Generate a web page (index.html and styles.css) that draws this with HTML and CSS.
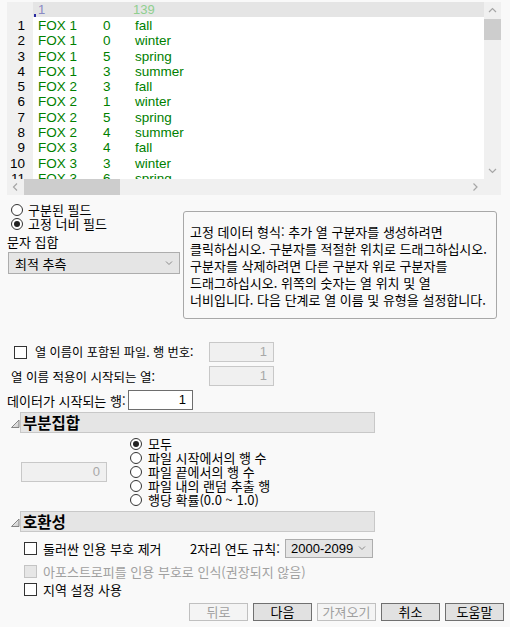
FILE: index.html
```html
<!DOCTYPE html>
<html lang="ko">
<head>
<meta charset="utf-8">
<link rel="stylesheet" href="styles.css">
</head>
<body>
<div class="preview">
  <div class="corner-tl"></div>
  <div class="head"><span class="mark"></span><span class="h1">1</span><span class="h2">139</span></div>
  <div class="vscroll">
    <svg class="up" width="17" height="17" viewBox="0 0 17 17"><polyline points="5,10 8.5,6.5 12,10" fill="none" stroke="#a6a6a6" stroke-width="1.2"/></svg>
    <div class="vthumb"></div>
    <div class="vspace"></div>
    <svg class="down" width="17" height="17" viewBox="0 0 17 17"><polyline points="5,7 8.5,10.5 12,7" fill="none" stroke="#a6a6a6" stroke-width="1.2"/></svg>
  </div>
  <div class="nums">
    <div class="r">1</div><div class="r">2</div><div class="r">3</div><div class="r">4</div><div class="r">5</div><div class="r">6</div><div class="r">7</div><div class="r">8</div><div class="r">9</div><div class="r">10</div><div class="r">11</div>
  </div>
  <div class="data">
    <div class="dr"><span>FOX 1</span><span>0</span><span>fall</span></div>
    <div class="dr"><span>FOX 1</span><span>0</span><span>winter</span></div>
    <div class="dr"><span>FOX 1</span><span>5</span><span>spring</span></div>
    <div class="dr"><span>FOX 1</span><span>3</span><span>summer</span></div>
    <div class="dr"><span>FOX 2</span><span>3</span><span>fall</span></div>
    <div class="dr"><span>FOX 2</span><span>1</span><span>winter</span></div>
    <div class="dr"><span>FOX 2</span><span>5</span><span>spring</span></div>
    <div class="dr"><span>FOX 2</span><span>4</span><span>summer</span></div>
    <div class="dr"><span>FOX 3</span><span>4</span><span>fall</span></div>
    <div class="dr"><span>FOX 3</span><span>3</span><span>winter</span></div>
    <div class="dr"><span>FOX 3</span><span>6</span><span>spring</span></div>
  </div>
  <div class="hscroll">
    <svg width="17" height="16" viewBox="0 0 17 16"><polyline points="10,4.5 6.5,8 10,11.5" fill="none" stroke="#a6a6a6" stroke-width="1.2"/></svg>
    <div class="hthumb"></div>
    <div class="hspace"></div>
    <svg width="17" height="16" viewBox="0 0 17 16"><polyline points="6.5,4.5 10,8 6.5,11.5" fill="none" stroke="#a6a6a6" stroke-width="1.2"/></svg>
  </div>
  <div class="corner-br"></div>
</div>

<div class="options">
  <div class="left">
    <div class="rrow"><span class="radio"></span><span>구분된 필드</span></div>
    <div class="rrow"><span class="radio on"></span><span>고정 너비 필드</span></div>
    <div class="lbl">문자 집합</div>
    <div class="select wide"><span>최적 추측</span><svg width="8" height="6" viewBox="0 0 8 6"><polyline points="1,1.5 4,4.5 7,1.5" fill="none" stroke="#8a8a8a" stroke-width="1"/></svg></div>
  </div>
  <div class="info">고정 데이터 형식: 추가 열 구분자를 생성하려면<br>클릭하십시오. 구분자를 적절한 위치로 드래그하십시오.<br>구분자를 삭제하려면 다른 구분자 위로 구분자를<br>드래그하십시오. 위쪽의 숫자는 열 위치 및 열<br>너비입니다. 다음 단계로 열 이름 및 유형을 설정합니다.</div>
</div>

<div class="fields">
  <div class="frow">
    <div class="flabel la"><span class="check"></span><span>열 이름이 포함된 파일. 행 번호:</span></div>
    <div class="input off">1</div>
  </div>
  <div class="frow">
    <div class="flabel lb">열 이름 적용이 시작되는 열:</div>
    <div class="input off">1</div>
  </div>
  <div class="frow">
    <div class="flabel lc">데이터가 시작되는 행:</div>
    <div class="input">1</div>
  </div>
</div>

<div class="sechead">
  <svg class="tri" width="10" height="12" viewBox="0 0 10 12"><defs><linearGradient id="g1" x1="0" y1="0" x2="1" y2="1"><stop offset="0" stop-color="#ffffff"/><stop offset="1" stop-color="#c8c8c8"/></linearGradient></defs><polygon points="9,3 9,10.5 1.5,10.5" fill="url(#g1)" stroke="#7a7a7a" stroke-width="0.9"/></svg>
  <div class="bar">부분집합</div>
</div>

<div class="subset">
  <div class="sleft"><div class="input off num0">0</div></div>
  <div class="rlist">
    <div class="rrow"><span class="radio on"></span><span>모두</span></div>
    <div class="rrow"><span class="radio"></span><span>파일 시작에서의 행 수</span></div>
    <div class="rrow"><span class="radio"></span><span>파일 끝에서의 행 수</span></div>
    <div class="rrow"><span class="radio"></span><span>파일 내의 랜덤 추출 행</span></div>
    <div class="rrow"><span class="radio"></span><span>행당 확률(0.0 ~ 1.0)</span></div>
  </div>
</div>

<div class="sechead second">
  <svg class="tri" width="10" height="12" viewBox="0 0 10 12"><defs><linearGradient id="g2" x1="0" y1="0" x2="1" y2="1"><stop offset="0" stop-color="#ffffff"/><stop offset="1" stop-color="#c8c8c8"/></linearGradient></defs><polygon points="9,3 9,10.5 1.5,10.5" fill="url(#g2)" stroke="#7a7a7a" stroke-width="0.9"/></svg>
  <div class="bar">호환성</div>
</div>

<div class="compat">
  <div class="crow c1">
    <div class="cl"><span class="check"></span><span>둘러싼 인용 부호 제거</span></div>
    <div class="yl">2자리 연도 규칙:</div>
    <div class="select year"><span>2000-2099</span><svg width="8" height="6" viewBox="0 0 8 6"><polyline points="1,1.5 4,4.5 7,1.5" fill="none" stroke="#8a8a8a" stroke-width="1"/></svg></div>
  </div>
  <div class="crow c2 dis"><span class="check off"></span><span>아포스트로피를 인용 부호로 인식(권장되지 않음)</span></div>
  <div class="crow c3"><span class="check"></span><span>지역 설정 사용</span></div>
</div>

<div class="buttons">
  <div class="btn off">뒤로</div>
  <div class="btn">다음</div>
  <div class="btn off">가져오기</div>
  <div class="btn">취소</div>
  <div class="btn">도움말</div>
</div>
</body>
</html>
```

FILE: styles.css
```css
html, body {
  margin: 0;
  padding: 0;
}
body {
  width: 510px;
  height: 627px;
  overflow: hidden;
  background: #f9f9f9;
  font-family: "Noto Sans CJK KR", "Noto Sans", sans-serif;
  font-size: 13px;
  color: #000;
}

/* ---------- data preview ---------- */
.preview {
  margin: 2px 0 0 7px;
  width: 494px;
  height: 193px;
  display: grid;
  grid-template-columns: 26px 451px 17px;
  grid-template-rows: 15px 162px 16px;
  background: #f0f0f0;
  font-family: "Liberation Sans", Arial, sans-serif;
  font-size: 13.5px;
}
.corner-tl { grid-column: 1; grid-row: 1; }
.head {
  grid-column: 2;
  grid-row: 1;
  background: #e5e5e5;
  position: relative;
  display: flex;
  align-items: center;
  line-height: 15px;
  font-size: 13px;
}
.mark {
  position: absolute;
  left: 1px;
  top: 12px;
  width: 2px;
  height: 3px;
  background: #2a2aa0;
}
.h1 { margin-left: 5px; color: #8a8ac4; width: 95px; }
.h2 { color: #8fcf8f; }

.vscroll {
  grid-column: 3;
  grid-row: 1 / 3;
  display: flex;
  flex-direction: column;
  background: #f0f0f0;
}
.vscroll svg { display: block; flex: none; }
.vthumb { height: 21px; background: #cdcdcd; flex: none; }
.vspace { flex: 1; }

.nums {
  grid-column: 1;
  grid-row: 2;
  overflow: hidden;
  text-align: right;
  padding: 1px 8px 0 0;
}
.r, .dr { height: 15.3px; line-height: 15.3px; }
.data {
  grid-column: 2;
  grid-row: 2;
  background: #fff;
  overflow: hidden;
  padding-top: 1px;
  color: #008000;
}
.dr {
  display: grid;
  grid-template-columns: 65px 32px 1fr;
  padding-left: 5px;
}
.hscroll {
  grid-column: 1 / 3;
  grid-row: 3;
  display: flex;
  background: #f0f0f0;
}
.hscroll svg { display: block; flex: none; }
.hthumb { width: 96px; background: #cdcdcd; }
.hspace { flex: 1; }
.corner-br { grid-column: 3; grid-row: 3; background: #f0f0f0; }

/* ---------- options ---------- */
.options {
  display: flex;
  height: 124px;
}
.left {
  width: 176px;
  padding: 8px 0 0 7px;
}
.rrow {
  height: 14px;
  display: flex;
  align-items: center;
  line-height: 14px;
  white-space: nowrap;
}
.left .rrow { padding-left: 4px; }
.radio {
  width: 12px;
  height: 12px;
  box-sizing: border-box;
  border: 1px solid #333;
  border-radius: 50%;
  background: #fff;
  margin-right: 5px;
  flex: none;
  display: flex;
  align-items: center;
  justify-content: center;
}
.radio.on::after {
  content: "";
  width: 6px;
  height: 6px;
  border-radius: 50%;
  background: #222;
}
.lbl {
  margin-top: 4px;
  height: 14px;
  line-height: 14px;
}
.select {
  box-sizing: border-box;
  border: 1px solid #adadad;
  background: #e5e5e5;
  display: flex;
  align-items: center;
  justify-content: space-between;
}
.select.wide {
  margin: 3px 0 0 1px;
  width: 172px;
  height: 22px;
  padding: 0 6px 0 6px;
}
.info {
  margin-top: 16px;
  width: 314px;
  height: 108px;
  box-sizing: border-box;
  border: 1px solid #a8a8a8;
  border-radius: 3px;
  padding: 11px 0 0 6px;
  line-height: 17px;
  white-space: nowrap;
}

/* ---------- fields ---------- */
.fields {
  margin-top: 23px;
}
.frow {
  display: flex;
  align-items: center;
  height: 20px;
  margin-bottom: 4px;
}
.flabel {
  display: flex;
  align-items: center;
  white-space: nowrap;
}
.la { width: 195px; padding-left: 14px; font-size: 12.2px; }
.lb { width: 198px; padding-left: 11px; font-size: 12.5px; }
.lc { width: 121px; padding-left: 7px; }
.check {
  width: 13px;
  height: 13px;
  box-sizing: border-box;
  border: 1px solid #333;
  background: #fff;
  margin-right: 8px;
  flex: none;
}
.check.off {
  border-color: #c4c4c4;
  background: #e6e6e6;
}
.input {
  width: 65px;
  height: 20px;
  box-sizing: border-box;
  border: 1px solid #6e6e6e;
  background: #fff;
  text-align: right;
  padding-right: 6px;
  line-height: 18px;
  font-family: "Liberation Sans", Arial, sans-serif;
  font-size: 13px;
}
.input.off {
  border-color: #c8c8c8;
  background: #f0f0f0;
  color: #a8a8a8;
}

/* ---------- section headers ---------- */
.sechead {
  display: flex;
  align-items: center;
  height: 21px;
  margin-top: -2px;
  padding-left: 10px;
}
.sechead.second { margin-top: 4px; }
.tri { display: block; flex: none; }
.bar {
  width: 355px;
  height: 21px;
  box-sizing: border-box;
  border: 1px solid #c8c8c8;
  background: #e5e5e5;
  font-weight: bold;
  font-size: 15.5px;
  line-height: 19px;
  padding-left: 2px;
}

/* ---------- subset ---------- */
.subset {
  display: flex;
  align-items: center;
  padding-top: 4px;
}
.sleft {
  width: 109px;
  padding-left: 21px;
}
.num0 { width: 86px; }
.rlist .radio { margin-right: 6px; }

/* ---------- compat ---------- */
.compat { margin-top: 6px; }
.crow {
  display: flex;
  align-items: center;
  white-space: nowrap;
  padding-left: 24px;
}
.crow .check { margin-right: 6px; }
.c1 { height: 20px; }
.c2 { height: 18px; margin-top: 4px; }
.c3 { height: 18px; }
.dis { color: #a0a0a0; }
.cl { display: flex; align-items: center; width: 166px; }
.yl { width: 95px; }
.select.year {
  width: 88px;
  height: 19px;
  padding: 0 6px 0 5px;
  font-family: "Liberation Sans", Arial, sans-serif;
  font-size: 13px;
}

/* ---------- buttons ---------- */
.buttons {
  display: flex;
  justify-content: flex-end;
  gap: 5px;
  margin-top: 5px;
  padding-right: 6px;
}
.btn {
  width: 59px;
  height: 18px;
  box-sizing: border-box;
  border: 1px solid #707070;
  background: #e1e1e1;
  text-align: center;
  line-height: 16px;
  font-size: 13px;
}
.btn.off {
  border-color: #c0c0c0;
  background: #f4f4f4;
  color: #a0a0a0;
}
```
